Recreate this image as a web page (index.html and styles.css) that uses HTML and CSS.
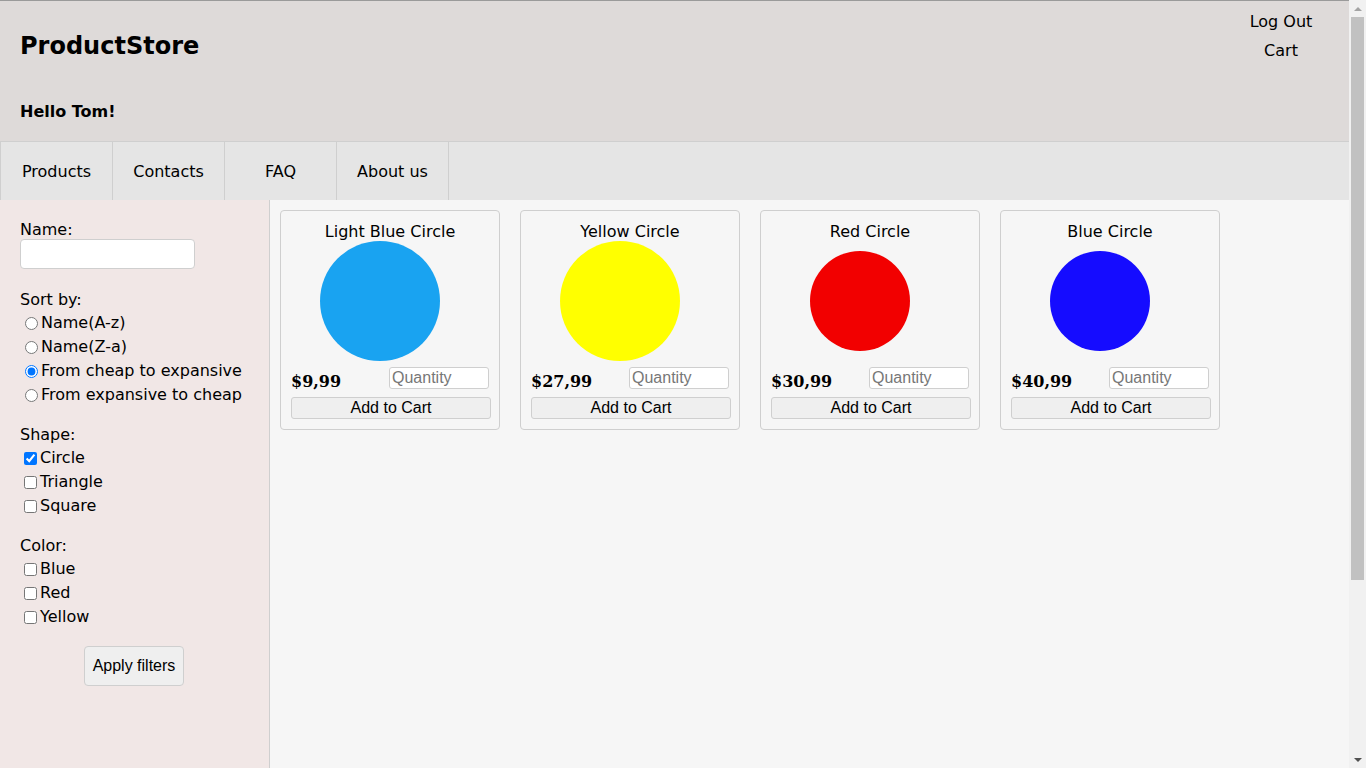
FILE: index.html
```html
<!DOCTYPE html>
<html lang="en">
<head>
<meta charset="utf-8">
<title>ProductStore</title>
<link rel="stylesheet" href="styles.css">
</head>
<body>
<header class="header">
  <div class="header-left">
    <h1 class="logo">ProductStore</h1>
    <p class="greeting">Hello Tom!</p>
  </div>
  <div class="header-right">
    <a class="header-link" href="#">Log Out</a>
    <a class="header-link" href="#">Cart</a>
  </div>
</header>
<nav class="nav">
  <a class="nav-item" href="#">Products</a>
  <a class="nav-item" href="#">Contacts</a>
  <a class="nav-item" href="#">FAQ</a>
  <a class="nav-item" href="#">About us</a>
</nav>
<div class="content">
  <aside class="sidebar">
    <div class="group group-name">
      <div class="group-label">Name:</div>
      <input class="name-input" type="text">
    </div>
    <div class="group">
      <div class="group-label">Sort by:</div>
      <label class="opt"><input type="radio" name="sort">Name(A-z)</label>
      <label class="opt"><input type="radio" name="sort">Name(Z-a)</label>
      <label class="opt"><input type="radio" name="sort" checked>From cheap to expansive</label>
      <label class="opt"><input type="radio" name="sort">From expansive to cheap</label>
    </div>
    <div class="group">
      <div class="group-label">Shape:</div>
      <label class="opt"><input type="checkbox" checked>Circle</label>
      <label class="opt"><input type="checkbox">Triangle</label>
      <label class="opt"><input type="checkbox">Square</label>
    </div>
    <div class="group">
      <div class="group-label">Color:</div>
      <label class="opt"><input type="checkbox">Blue</label>
      <label class="opt"><input type="checkbox">Red</label>
      <label class="opt"><input type="checkbox">Yellow</label>
    </div>
    <div class="apply-wrap"><button class="apply-btn">Apply filters</button></div>
  </aside>
  <main class="main">
    <div class="card">
      <div class="card-title">Light Blue Circle</div>
      <div class="card-image"><div class="circle big lightblue"></div></div>
      <div class="card-row"><span class="price">$9,99</span><input class="qty" type="text" placeholder="Quantity"></div>
      <button class="add-btn">Add to Cart</button>
    </div>
    <div class="card">
      <div class="card-title">Yellow Circle</div>
      <div class="card-image"><div class="circle big yellow"></div></div>
      <div class="card-row"><span class="price">$27,99</span><input class="qty" type="text" placeholder="Quantity"></div>
      <button class="add-btn">Add to Cart</button>
    </div>
    <div class="card">
      <div class="card-title">Red Circle</div>
      <div class="card-image"><div class="circle small red"></div></div>
      <div class="card-row"><span class="price">$30,99</span><input class="qty" type="text" placeholder="Quantity"></div>
      <button class="add-btn">Add to Cart</button>
    </div>
    <div class="card">
      <div class="card-title">Blue Circle</div>
      <div class="card-image"><div class="circle small blue"></div></div>
      <div class="card-row"><span class="price">$40,99</span><input class="qty" type="text" placeholder="Quantity"></div>
      <button class="add-btn">Add to Cart</button>
    </div>
  </main>
</div>
<div class="scrollbar" aria-hidden="true">
  <div class="sb-arrow sb-up"></div>
  <div class="sb-track"><div class="sb-thumb"></div></div>
  <div class="sb-arrow sb-down"></div>
</div>
</body>
</html>
```

FILE: styles.css
```css
html, body {
  margin: 0;
  padding: 0;
}
html {
  background: #f6f6f6;
}
body {
  font-family: "DejaVu Sans", Verdana, sans-serif;
  font-size: 16px;
  color: #000;
  background: #f6f6f6;
  margin-right: 17px;
}
.header {
  display: flex;
  justify-content: space-between;
  background: #dedad9;
  border-top: 1px solid #9a9a9a;
  height: 141px;
  box-sizing: border-box;
}
.header-left {
  padding-left: 20px;
}
.logo {
  margin: 0;
  padding-top: 30px;
  font-size: 24px;
  line-height: 30px;
  font-weight: bold;
}
.greeting {
  margin: 0;
  padding-top: 41px;
  font-size: 16px;
  line-height: 20px;
  font-weight: bold;
}
.header-right {
  display: flex;
  flex-direction: column;
  align-items: center;
  width: 80px;
  margin-right: 28px;
  padding-top: 6px;
}
.header-link {
  color: #000;
  text-decoration: none;
  line-height: 29px;
}
.nav {
  display: flex;
  background: #e5e5e5;
  border-top: 1px solid #cfcfcf;
  border-left: 1px solid #cfcfcf;
  height: 58px;
}
.nav-item {
  width: 111px;
  border-right: 1px solid #cfcfcf;
  display: flex;
  align-items: center;
  justify-content: center;
  color: #000;
  text-decoration: none;
}
.content {
  display: flex;
  min-height: 800px;
}
.sidebar {
  width: 249px;
  flex-shrink: 0;
  background: #f1e7e6;
  border-right: 1px solid #cfcfcf;
  padding: 21px 0 0 20px;
}
.group {
  margin-bottom: 19px;
}
.group-name {
  margin-bottom: 22px;
}
.group-label {
  line-height: 18px;
  margin-bottom: 2px;
}
.group-name .group-label {
  margin-bottom: 0;
}
.name-input {
  display: block;
  width: 175px;
  height: 30px;
  box-sizing: border-box;
  border: 1px solid #cfcfcf;
  border-radius: 4px;
  background: #fff;
  margin: 0;
}
.opt {
  display: flex;
  align-items: center;
  height: 24px;
  line-height: 24px;
}
.opt input {
  margin-top: 0;
  margin-bottom: 0;
}
.apply-wrap {
  display: flex;
  justify-content: center;
  padding-right: 21px;
  margin-top: -2px;
}
.apply-btn {
  font-family: "Liberation Sans", Arial, sans-serif;
  font-size: 16px;
  width: 100px;
  height: 40px;
  background: #efefef;
  border: 1px solid #cfcfcf;
  border-radius: 4px;
  color: #000;
  padding: 0;
}
.main {
  flex: 1;
  display: flex;
  align-items: flex-start;
  gap: 20px;
  padding: 10px;
}
.card {
  width: 220px;
  height: 220px;
  box-sizing: border-box;
  border: 1px solid #cfcfcf;
  border-radius: 4px;
  padding: 9px 10px 10px;
  display: flex;
  flex-direction: column;
}
.card-title {
  text-align: center;
  line-height: 23px;
  height: 21px;
}
.card-image {
  height: 120px;
  display: flex;
  align-items: center;
  justify-content: center;
  padding-right: 20px;
}
.circle {
  border-radius: 50%;
}
.circle.big {
  width: 120px;
  height: 120px;
}
.circle.small {
  width: 100px;
  height: 100px;
}
.lightblue { background: #19a3f1; }
.yellow { background: #ffff00; }
.red { background: #f20000; }
.blue { background: #150cff; }
.card-row {
  display: flex;
  justify-content: space-between;
  align-items: flex-end;
  margin-top: 6px;
  height: 22px;
}
.price {
  font-family: "DejaVu Serif", Georgia, serif;
  font-weight: bold;
  font-size: 16px;
  line-height: 18px;
  margin-bottom: -2px;
}
.qty {
  width: 100px;
  height: 22px;
  box-sizing: border-box;
  border: 1px solid #cfcfcf;
  border-radius: 3px;
  font-family: "Liberation Sans", Arial, sans-serif;
  font-size: 16px;
  padding: 0 2px;
  margin: 0;
  background: #fff;
}
.qty::placeholder {
  color: #777;
}
.add-btn {
  margin-top: 8px;
  width: 200px;
  height: 22px;
  box-sizing: border-box;
  font-family: "Liberation Sans", Arial, sans-serif;
  font-size: 16px;
  background: #efefef;
  border: 1px solid #cfcfcf;
  border-radius: 3px;
  color: #000;
  padding: 0;
  line-height: 18px;
}
.scrollbar {
  position: fixed;
  top: 0;
  right: 0;
  width: 17px;
  height: 100vh;
  background: #f1f1f1;
  display: flex;
  flex-direction: column;
}
.sb-arrow {
  height: 17px;
  flex-shrink: 0;
  display: flex;
  align-items: center;
  justify-content: center;
}
.sb-up::before {
  content: "";
  border-left: 4px solid transparent;
  border-right: 4px solid transparent;
  border-bottom: 4px solid #a3a3a3;
}
.sb-down::before {
  content: "";
  border-left: 4px solid transparent;
  border-right: 4px solid transparent;
  border-top: 4px solid #505050;
}
.sb-track {
  flex: 1;
  padding: 0 2px;
}
.sb-thumb {
  height: 563px;
  background: #c1c1c1;
}
```
